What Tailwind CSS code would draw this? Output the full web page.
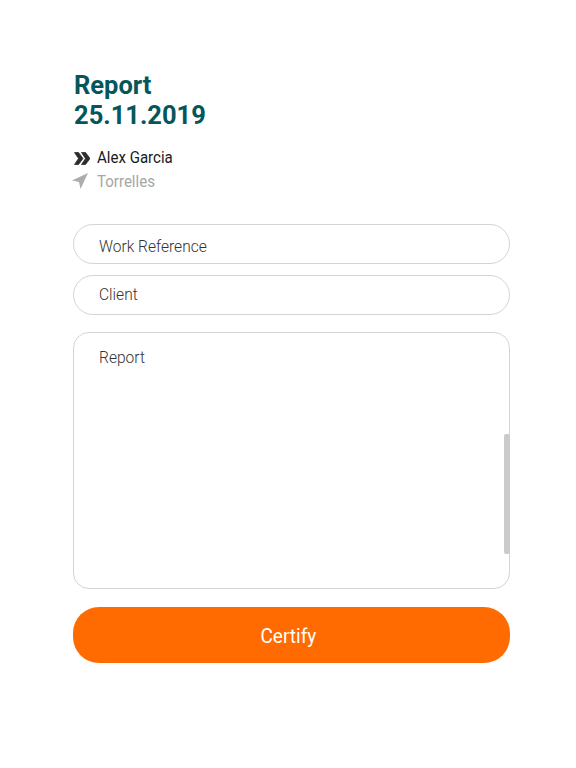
<!DOCTYPE html>
<html lang="en">
<head>
    <meta charset="UTF-8">
    <title>Report</title>
    <script src="https://cdn.jsdelivr.net/npm/@tailwindcss/browser@4"></script>
</head>
<body class="bg-white font-['Roboto',sans-serif]">
    <div class="w-[576px] h-[768px] pt-[70px] pl-[73px] pr-[66px]">
        <h1 class="pl-[1px] text-[25.5px] leading-[30px] font-bold text-[#04565b]">Report<br>25.11.2019</h1>

        <div class="mt-[16px] flex items-center h-[24px]">
            <svg class="ml-[1px] w-[16px] h-[13px]" viewBox="0 0 16 13">
                <path d="M0.500 0.500h4L9 6.500l-4.500 6h-4L4.500 6.500zM7.500 0.500h4L16 6.500l-4.500 6h-4L11.500 6.500z" fill="#2d2d2d" stroke="#2d2d2d" stroke-width="0.800" stroke-linejoin="round"/>
            </svg>
            <span class="ml-[7px] inline-block origin-left scale-x-[.94] text-[16px] font-normal text-[#1a1a1a]">Alex Garcia</span>
        </div>
        <div class="flex items-center h-[24px] -ml-[1px]">
            <svg class="-mt-[2px] w-[16px] h-[16px]" viewBox="0 0 16 16">
                <path d="M16 0L0 7.500l7 1.500 1.500 7z" fill="#adadad"/>
            </svg>
            <span class="ml-[9px] inline-block origin-left scale-x-[.94] text-[16px] font-normal text-[#a6a6a6]">Torrelles</span>
        </div>

        <div class="mt-[30px] h-[40px] rounded-[20px] border border-[#d4d4d4] pl-[25px] pt-[5px] flex items-center text-[17px] font-light text-[#333]">
            <span class="inline-block origin-left scale-x-[.915]">Work Reference</span>
        </div>
        <div class="mt-[11px] h-[40px] rounded-[20px] border border-[#d4d4d4] pl-[25px] flex items-center text-[17px] font-light text-[#333]">
            <span class="inline-block origin-left scale-x-[.915]">Client</span>
        </div>

        <div class="relative mt-[17px] h-[257px] rounded-[16px] border border-[#d4d4d4] pl-[25px] pt-[14px] text-[17px] leading-[20px] font-light text-[#333]">
            <span class="inline-block origin-left scale-x-[.915]">Report</span>
            <div class="absolute -right-[1px] top-[101px] w-[6px] h-[120px] rounded-[2px] bg-[#cbcbcb]"></div>
        </div>

        <button class="mt-[18px] w-[437px] h-[56px] pr-[6px] pt-[2px] rounded-[26px] bg-[#ff6b00] text-white text-[20px] font-normal">
            <span class="inline-block scale-x-[.95]">Certify</span>
        </button>
    </div>
</body>
</html>
